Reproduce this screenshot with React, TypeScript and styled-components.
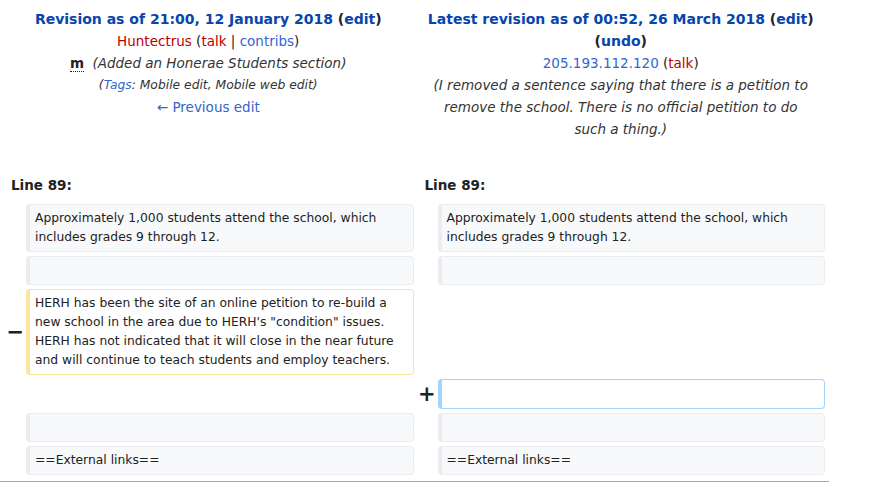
import React from "react";
import styled, { createGlobalStyle } from "styled-components";

const Global = createGlobalStyle`
  html, body { margin: 0; padding: 0; background: #fff; }
  body { font-family: "DejaVu Sans", sans-serif; color: #222; }
`;

const Page = styled.div`
  width: 829px;
  padding-top: 8px;
`;

const Header = styled.div`
  display: grid;
  grid-template-columns: 1fr 1fr;
  column-gap: 4px;
  padding: 0 4px;
  align-items: start;
`;

const HeaderCell = styled.div`
  text-align: center;
  font-size: 13.5px;
  line-height: 22px;
  padding: 0 7px;
  color: #222;
`;

const Title = styled.div`
  font-weight: bold;
  font-size: 14px;
`;

const Link = styled.a<{ $red?: boolean; $light?: boolean }>`
  color: ${(p) => (p.$red ? "#ba0000" : p.$light ? "#3366cc" : "#0645ad")};
  text-decoration: none;
`;

const Comment = styled.span`
  font-style: italic;
  color: #333;
`;

const CommentBlock = styled.div`
  font-style: italic;
  color: #333;
  padding: 0 4px;
`;

const Minor = styled.abbr`
  font-weight: bold;
  text-decoration: none;
  border-bottom: 1px dotted #222;
  margin-right: 4px;
`;

const Tags = styled.div`
  font-style: italic;
  font-size: 12.32px;
  color: #333;
`;

const Diff = styled.div`
  display: grid;
  grid-template-columns: 18px 1fr 16px 1fr;
  column-gap: 4px;
  row-gap: 4px;
  padding: 0 4px 6px;
  border-bottom: 1px solid #a2a9b1;
`;

const LineNo = styled.div`
  grid-column: span 2;
  font-weight: bold;
  font-size: 13.5px;
  line-height: 22px;
  padding: 34px 7px 4px;
`;

const Marker = styled.div`
  display: flex;
  align-items: center;
  justify-content: flex-end;
  margin-right: -2px;
  font-weight: bold;
  font-size: 21px;
  line-height: 1;
  color: #222;
`;

const Line = styled.div<{ $kind: "context" | "deleted" | "added" | "none" }>`
  font-size: 12.32px;
  line-height: 19px;
  white-space: pre-wrap;
  word-wrap: break-word;
  border-style: solid;
  border-width: ${(p) => (p.$kind === "none" ? "0" : "1px 1px 1px 4px")};
  border-radius: 4px;
  padding: 4px 8px 4px 5px;
  min-height: ${(p) => (p.$kind === "added" ? "20px" : "19px")};
  background: ${(p) => (p.$kind === "context" ? "#f8f9fa" : "#fff")};
  border-color: ${(p) =>
    p.$kind === "context"
      ? "#eaecf0"
      : p.$kind === "deleted"
      ? "#ffe49c"
      : p.$kind === "added"
      ? "#a3d3ff"
      : "transparent"};
  color: #222;
`;

export default function App() {
  return (
    <>
      <Global />
      <Page>
        <Header>
          <HeaderCell>
            <Title>
              <Link>Revision as of 21:00, 12 January 2018</Link> (<Link>edit</Link>)
            </Title>
            <div>
              <Link $red>Huntectrus</Link> (<Link $red>talk</Link> | <Link $light>contribs</Link>)
            </div>
            <div>
              <Minor title="This is a minor edit">m</Minor> <Comment>(Added an Honerae Students section)</Comment>
            </div>
            <Tags>
              (<Link $light>Tags</Link>: Mobile edit, Mobile web edit)
            </Tags>
            <div>
              <Link $light>← Previous edit</Link>
            </div>
          </HeaderCell>
          <HeaderCell>
            <Title>
              <Link>Latest revision as of 00:52, 26 March 2018</Link> (<Link>edit</Link>)
              <br />(<Link>undo</Link>)
            </Title>
            <div>
              <Link $light>205.193.112.120</Link> (<Link $red>talk</Link>)
            </div>
            <CommentBlock>
              (I removed a sentence saying that there is a petition to remove the school. There is no official petition to do such a thing.)
            </CommentBlock>
          </HeaderCell>
        </Header>
        <Diff>
          <LineNo>Line 89:</LineNo>
          <LineNo>Line 89:</LineNo>

          <Marker />
          <Line $kind="context">Approximately 1,000 students attend the school, which includes grades 9 through 12.</Line>
          <Marker />
          <Line $kind="context">Approximately 1,000 students attend the school, which includes grades 9 through 12.</Line>

          <Marker />
          <Line $kind="context" />
          <Marker />
          <Line $kind="context" />

          <Marker>−</Marker>
          <Line $kind="deleted">HERH has been the site of an online petition to re-build a new school in the area due to HERH's "condition" issues. HERH has not indicated that it will close in the near future and will continue to teach students and employ teachers.</Line>
          <Marker />
          <Line $kind="none" />

          <Marker />
          <Line $kind="none" />
          <Marker>+</Marker>
          <Line $kind="added" />

          <Marker />
          <Line $kind="context" />
          <Marker />
          <Line $kind="context" />

          <Marker />
          <Line $kind="context">==External links==</Line>
          <Marker />
          <Line $kind="context">==External links==</Line>
        </Diff>
      </Page>
    </>
  );
}
